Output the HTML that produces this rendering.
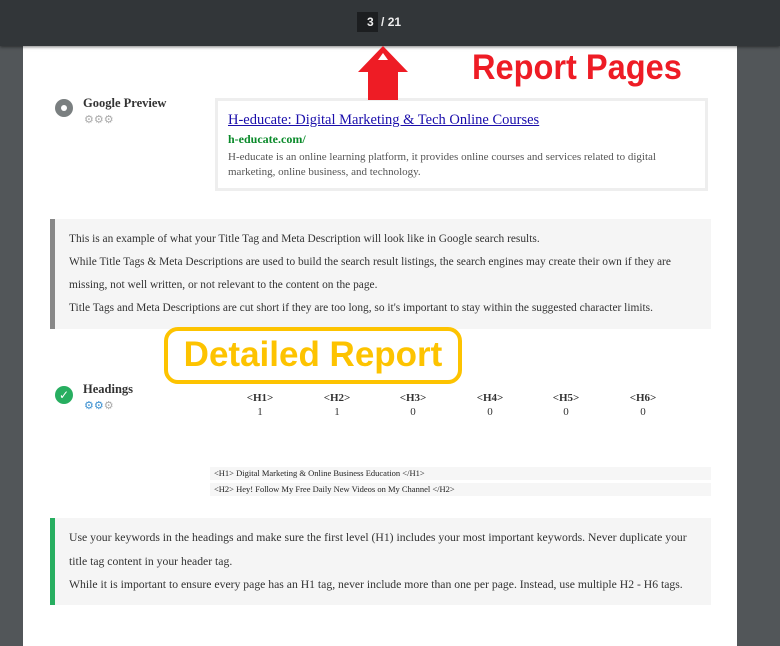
<!DOCTYPE html>
<html><head><meta charset="utf-8"><style>
*{margin:0;padding:0;box-sizing:border-box}
body{width:780px;height:619px;overflow:hidden;background:#525659;position:relative;font-family:"Liberation Serif",serif;color:#333}
.top{position:absolute;left:0;top:0;width:780px;height:46px;background:#323639;box-shadow:0 1px 3px rgba(0,0,0,.5);z-index:2}
.pg{position:absolute;left:357px;top:12px;height:20px;color:#eee;font:bold 12px "Liberation Sans",sans-serif;line-height:20px}
.pg span{background:#1c1e20;padding:0 4px 0 10px;display:inline-block}
.page{position:absolute;left:23px;top:46px;width:714px;height:600px;background:#fff}
.a{position:absolute}
.gp{left:215px;top:98px;width:493px;height:93px;border:3px solid #eeeeee;padding:10px 10px}
.gp a{color:#1a0dab;font-size:14.5px;text-decoration:underline}
.info{background:#f5f5f5;border-left:5px solid #888;font-size:11.4px;color:#333}
.hl{left:210px;width:501px;height:13px;background:#f6f6f6;font-size:8.5px;color:#222;padding-left:4px;line-height:13px}
.col{position:absolute;width:40px;text-align:center;font-size:11px;line-height:14px}
.dots{font-size:11px;letter-spacing:0px}
</style></head><body>
<div class="top"><div class="pg"><span>3</span> / 21</div></div>
<div class="page"></div>
<svg class="a" style="left:355px;top:44px;z-index:3" width="56" height="58"><polygon points="28,2 53,28 43,28 43,56 13,56 13,28 3,28" fill="#ee1c25"/><polygon points="28,9 23,16 33,16" fill="#fff"/></svg>
<div class="a" style="left:472px;top:48px;font:bold 35px 'Liberation Sans',sans-serif;color:#ee1c25;transform:scaleX(0.93);transform-origin:left">Report Pages</div>
<div class="a" style="left:55px;top:99px;width:18px;height:18px;border-radius:50%;background:#7a7f80"><div style="margin:6px;width:6px;height:6px;border-radius:50%;background:#fff"></div></div>
<div class="a" style="left:83px;top:96px;font-weight:bold;font-size:12.5px">Google Preview</div>
<div class="a dots" style="left:84px;top:113px;color:#aaa">⚙⚙⚙</div>
<div class="a gp"><a>H-educate: Digital Marketing &amp; Tech Online Courses</a>
<div style="color:#0a8a2a;font-weight:bold;font-size:12px;margin-top:3px">h-educate.com/</div>
<div style="font-size:11px;color:#555;line-height:15px;margin-top:3px">H-educate is an online learning platform, it provides online courses and services related to digital marketing, online business, and technology.</div></div>
<div class="a info" style="left:50px;top:219px;width:661px;height:110px;padding:9px 14px;line-height:23px">This is an example of what your Title Tag and Meta Description will look like in Google search results.<br>While Title Tags &amp; Meta Descriptions are used to build the search result listings, the search engines may create their own if they are missing, not well written, or not relevant to the content on the page.<br>Title Tags and Meta Descriptions are cut short if they are too long, so it's important to stay within the suggested character limits.</div>
<div class="a" style="left:164px;top:327px;width:298px;height:57px;border:4px solid #fdc300;border-radius:14px;font:bold 35px 'Liberation Sans',sans-serif;color:#fdc300;text-align:center;line-height:48px;white-space:nowrap">Detailed Report</div>
<div class="a" style="left:55px;top:386px;width:18px;height:18px;border-radius:50%;background:#27ae60;color:#fff;font:bold 12px 'DejaVu Sans',sans-serif;text-align:center;line-height:18px">✓</div>
<div class="a" style="left:83px;top:382px;font-weight:bold;font-size:12.5px">Headings</div>
<div class="a dots" style="left:84px;top:399px;color:#3a8fd0">⚙⚙<span style="color:#aaa">⚙</span></div>
<div class="col" style="left:240px;top:391px"><b>&lt;H1&gt;</b><br>1</div>
<div class="col" style="left:317px;top:391px"><b>&lt;H2&gt;</b><br>1</div>
<div class="col" style="left:393px;top:391px"><b>&lt;H3&gt;</b><br>0</div>
<div class="col" style="left:470px;top:391px"><b>&lt;H4&gt;</b><br>0</div>
<div class="col" style="left:546px;top:391px"><b>&lt;H5&gt;</b><br>0</div>
<div class="col" style="left:623px;top:391px"><b>&lt;H6&gt;</b><br>0</div>
<div class="a hl" style="top:467px">&lt;H1&gt; Digital Marketing &amp; Online Business Education &lt;/H1&gt;</div>
<div class="a hl" style="top:483px">&lt;H2&gt; Hey! Follow My Free Daily New Videos on My Channel &lt;/H2&gt;</div>
<div class="a info" style="left:50px;top:518px;width:661px;height:87px;padding:8px 14px;line-height:24px;border-left-color:#27ae60;font-size:11.7px">Use your keywords in the headings and make sure the first level (H1) includes your most important keywords. Never duplicate your title tag content in your header tag.<div style="line-height:24px;margin-top:-1px">While it is important to ensure every page has an H1 tag, never include more than one per page. Instead, use multiple H2 - H6 tags.</div></div>
</body></html>
